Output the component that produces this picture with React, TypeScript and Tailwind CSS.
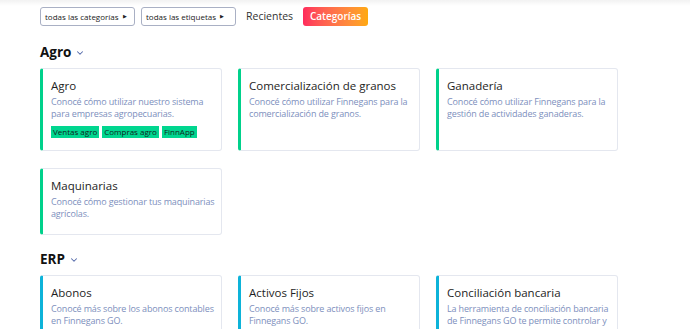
import { ChevronDown } from 'lucide-react';

type Card = { title: string; description: string; tags?: string[] };

const sections: { name: string; accent: string; top: string; cards: Card[] }[] = [
  {
    name: 'Agro',
    accent: 'border-l-[#00d18b]',
    top: 'mt-[17px]',
    cards: [
      {
        title: 'Agro',
        description: 'Conocé cómo utilizar nuestro sistema para empresas agropecuarias.',
        tags: ['Ventas agro', 'Compras agro', 'FinnApp'],
      },
      {
        title: 'Comercialización de granos',
        description: 'Conocé cómo utilizar Finnegans para la comercialización de granos.',
      },
      {
        title: 'Ganadería',
        description: 'Conocé cómo utilizar Finnegans para la gestión de actividades ganaderas.',
      },
      {
        title: 'Maquinarias',
        description: 'Conocé cómo gestionar tus maquinarias agrícolas.',
      },
    ],
  },
  {
    name: 'ERP',
    accent: 'border-l-[#0db3d9]',
    top: 'mt-[15px]',
    cards: [
      { title: 'Abonos', description: 'Conocé más sobre los abonos contables en Finnegans GO.' },
      { title: 'Activos Fijos', description: 'Conocé más sobre activos fijos en Finnegans GO.' },
      {
        title: 'Conciliación bancaria',
        description:
          'La herramienta de conciliación bancaria de Finnegans GO te permite controlar y comparar los movimientos bancarios.',
      },
    ],
  },
];

function FilterButton({ label }: { label: string }) {
  return (
    <button className="flex h-[19px] w-[95px] items-center gap-[4px] rounded-[3px] border border-[#a9b0c4] bg-white px-[4px] text-[8px] text-[#222]">
      {label}
      <span className="text-[5px] leading-none">▶</span>
    </button>
  );
}

function CategoryCard({ card, accent }: { card: Card; accent: string }) {
  return (
    <div
      className={`flex flex-col rounded-[3px] border border-[#e4e7ef] border-l-[3px] ${accent} bg-white pl-[8px] pr-[2px] pt-[9px] pb-[12px] min-h-[67px]`}
    >
      <h3 className="text-[11.5px] leading-[16px] text-[#1e1e24]">{card.title}</h3>
      <p className="mt-[2px] text-[9px] leading-[12px] tracking-[-0.15px] text-[#7d8fbd]">{card.description}</p>
      {card.tags && (
        <div className="mt-[6px] flex gap-[3px]">
          {card.tags.map((t) => (
            <span key={t} className="bg-[#00d68f] px-[2px] text-[8px] leading-[12px] text-[#10241c]">
              {t}
            </span>
          ))}
        </div>
      )}
    </div>
  );
}

export default function App() {
  return (
    <div className="relative h-[329px] w-[690px] overflow-hidden bg-white font-['Open_Sans',sans-serif]">
      <div className="absolute inset-x-0 top-0 h-[6px] bg-gradient-to-b from-[#0000000d] to-transparent" />
      <div className="pl-[40px] pr-[72px] pt-[7px]">
        <div className="flex items-center">
          <FilterButton label="todas las categorías" />
          <div className="ml-[6px]">
            <FilterButton label="todas las etiquetas" />
          </div>
          <span className="ml-[10px] text-[10.5px] text-[#333]">Recientes</span>
          <button className="ml-[10px] h-[19px] w-[65px] rounded-[3px] bg-gradient-to-r from-[#ff2a5c] to-[#ffa90a] text-[10px] font-semibold text-white">
            Categorías
          </button>
        </div>

        {sections.map((s) => (
          <div key={s.name}>
            <div className={`${s.top} mb-[7px] flex items-center gap-[4px]`}>
              <h2 className="text-[13.5px] font-bold leading-[18px] text-[#111]">{s.name}</h2>
              <ChevronDown size={10} strokeWidth={2.5} className="mt-[2px] text-[#5067a8]" />
            </div>
            <div className="grid grid-cols-3 gap-x-[16px] gap-y-[17px]">
              {s.cards.map((c) => (
                <CategoryCard key={c.title} card={c} accent={s.accent} />
              ))}
            </div>
          </div>
        ))}
      </div>
    </div>
  );
}
